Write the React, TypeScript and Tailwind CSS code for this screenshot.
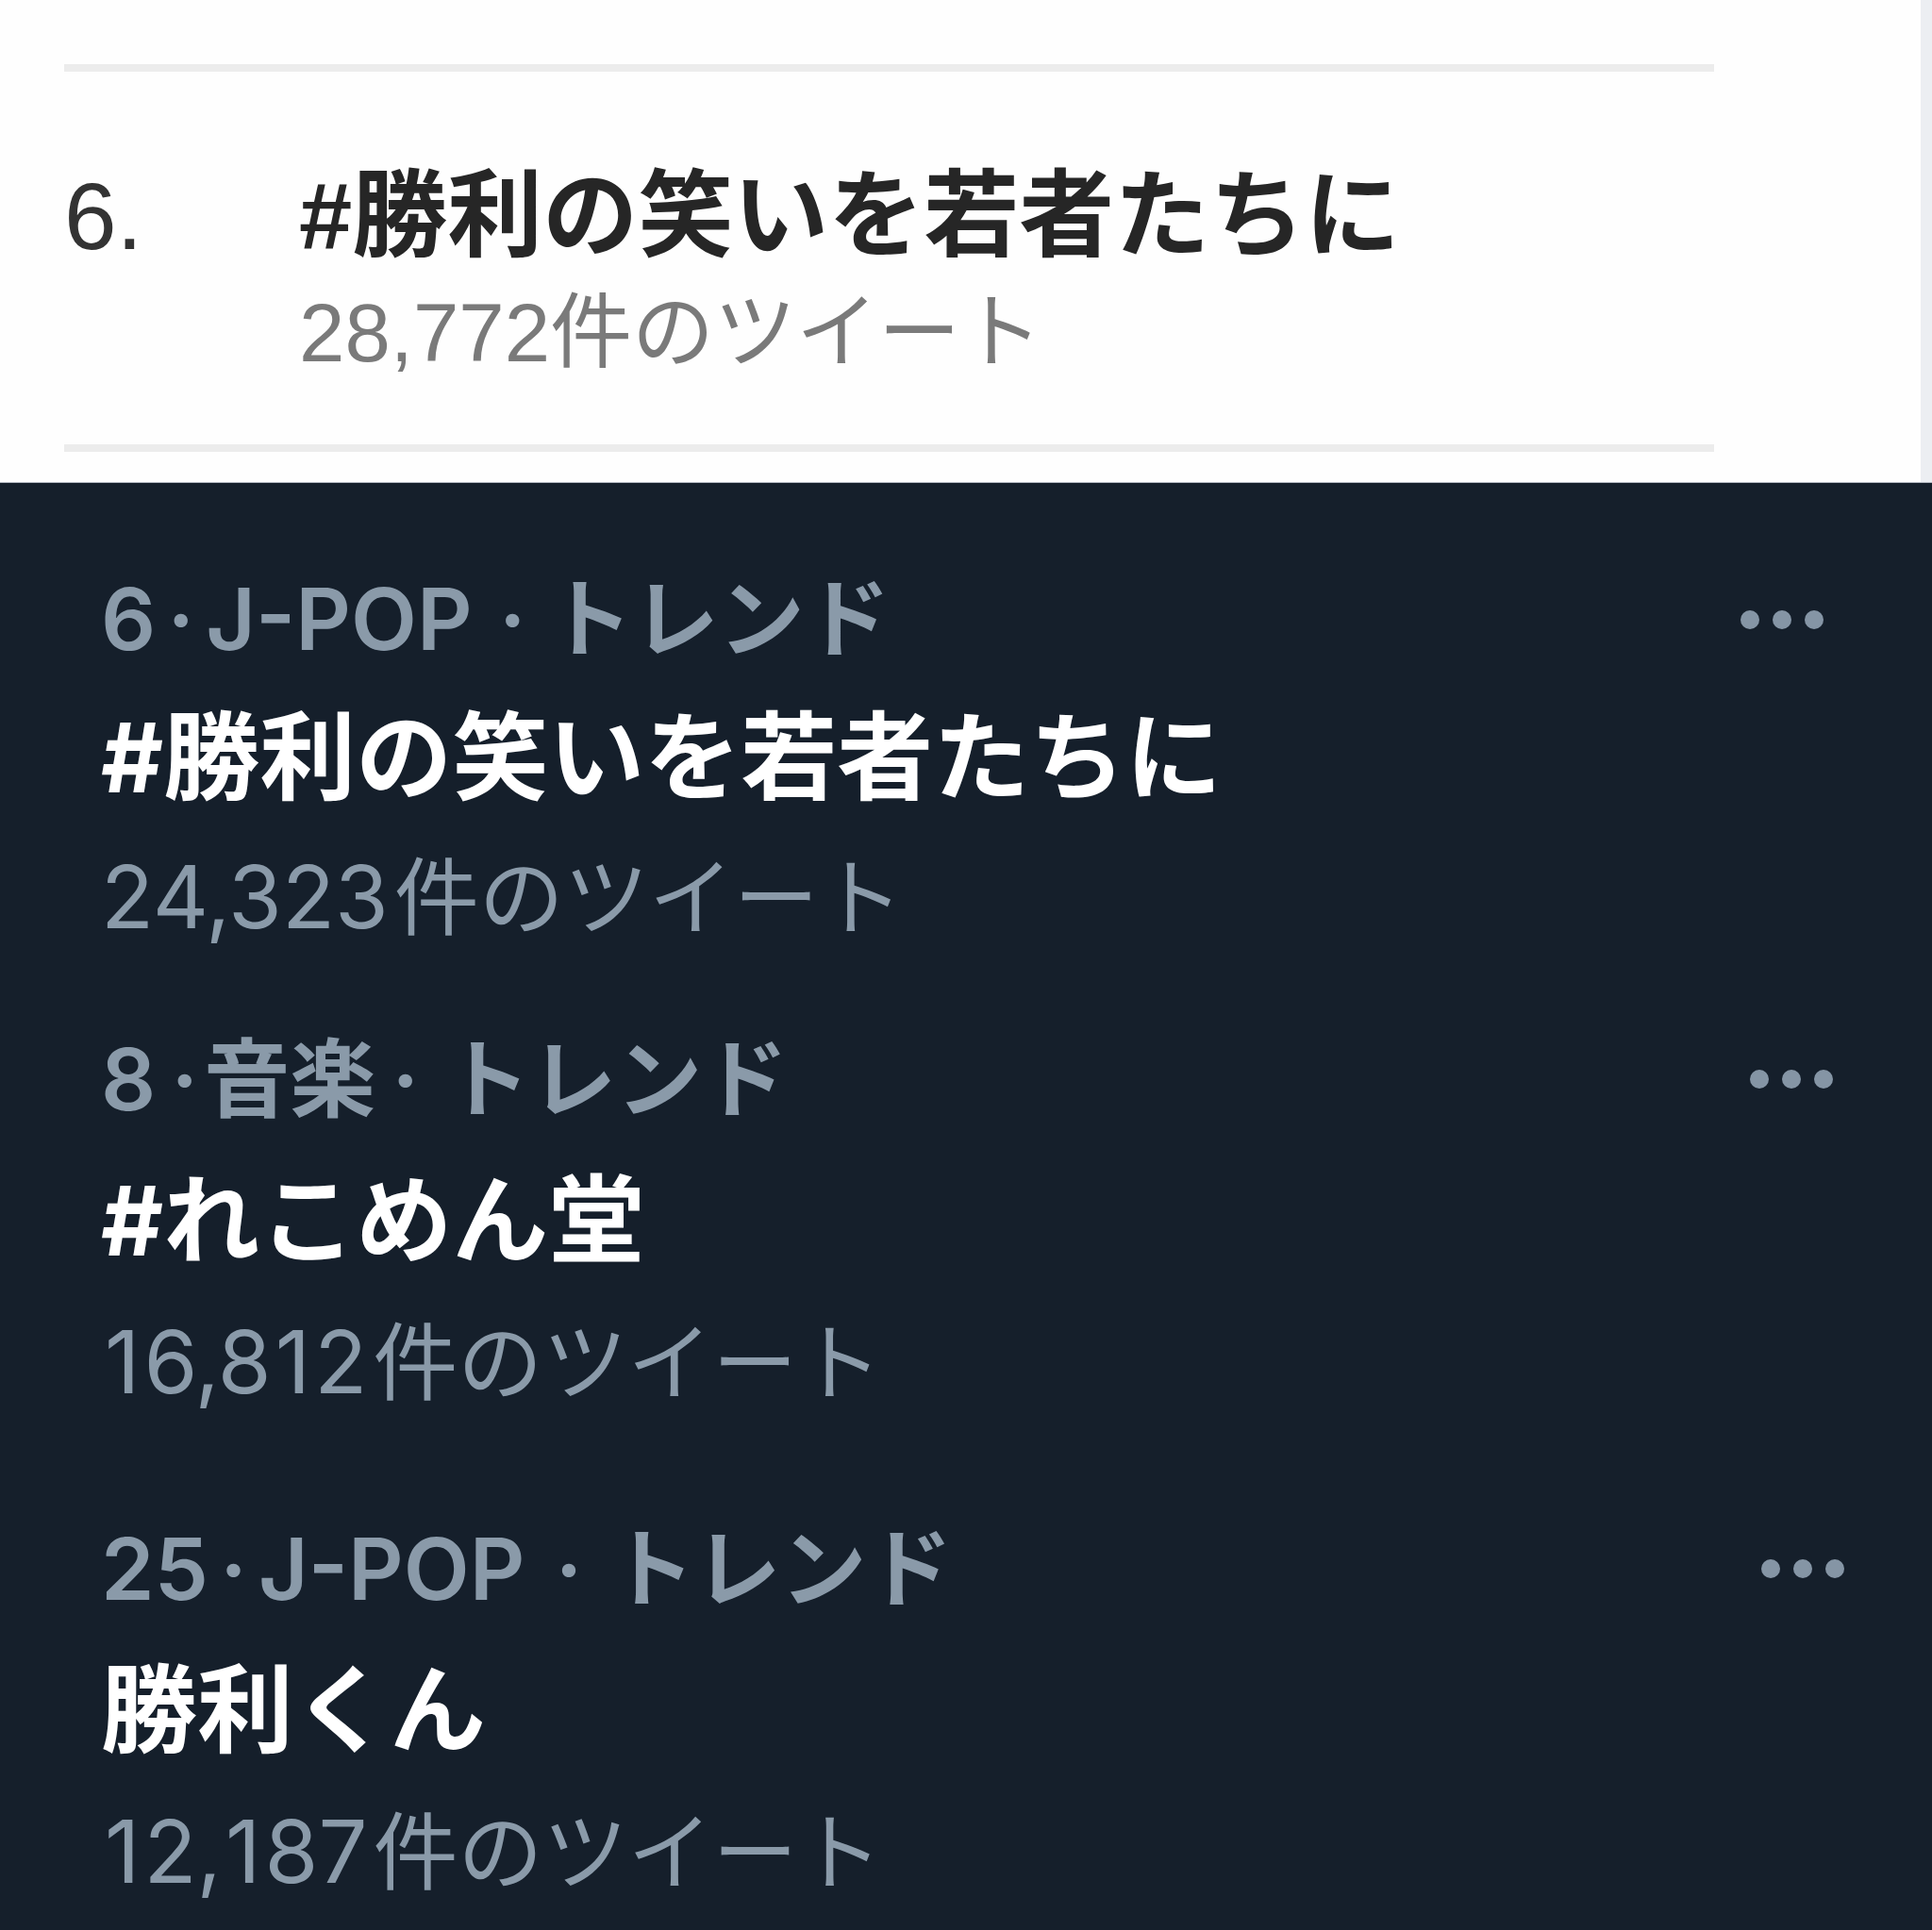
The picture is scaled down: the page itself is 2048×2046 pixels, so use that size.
import type React from "react"

interface Trend {
  rank: string
  category: string
  title: string
  count: string
  leading: string
  gapTop: string
  dotsPad: string
  sepA: string
  sepB: string
}

const trends: Trend[] = [
  {
    rank: "6",
    category: "J-POP",
    title: "#勝利の笑いを若者たちに",
    count: "24,323",
    leading: "leading-[147px]",
    gapTop: "mt-[71px]",
    dotsPad: "pr-[115px]",
    sepA: "mx-[12px]",
    sepB: "ml-[28px] mr-[22px]",
  },
  {
    rank: "8",
    category: "音楽",
    title: "#れこめん堂",
    count: "16,812",
    leading: "leading-[150px]",
    gapTop: "mt-[44px]",
    dotsPad: "pr-[105px]",
    sepA: "ml-[16px] mr-[6px]",
    sepB: "ml-[17px] mr-[27px]",
  },
  {
    rank: "25",
    category: "J-POP",
    title: "勝利くん",
    count: "12,187",
    leading: "leading-[150px]",
    gapTop: "mt-[68px]",
    dotsPad: "pr-[93px]",
    sepA: "mx-[12px]",
    sepB: "ml-[32px] mr-[28px]",
  },
]

const MoreDots: React.FC = () => (
  <div className="flex items-center gap-[14px]">
    <span className="w-[20px] h-[20px] rounded-full bg-[#8595a5]" />
    <span className="w-[20px] h-[20px] rounded-full bg-[#8595a5]" />
    <span className="w-[20px] h-[20px] rounded-full bg-[#8595a5]" />
  </div>
)

// the "1" in the source font is wider than Inter's
const Count: React.FC<{ value: string }> = ({ value }) => (
  <span className="text-[92px]">
    {value.split("").map((c, i) =>
      c === "1" ? (
        <span key={i} className="px-[4px]">
          1
        </span>
      ) : (
        c
      )
    )}
  </span>
)

const TrendRow: React.FC<{ trend: Trend }> = ({ trend }) => (
  <div className={`${trend.gapTop} flex flex-col`}>
    <div className={`flex items-center justify-between ${trend.dotsPad}`}>
      <div className={`${trend.leading} text-[91px] font-semibold text-[#8a9aa9] whitespace-nowrap`}>
        {trend.rank}
        <span className={trend.sepA}>·</span>
        {trend.category}
        <span className={trend.sepB}>·</span>
        トレンド
      </div>
      <MoreDots />
    </div>
    <div className={`${trend.leading} text-[102px] font-bold text-white whitespace-nowrap`}>
      {trend.title}
    </div>
    <div className={`${trend.leading} text-[90px] text-[#8a9aa9] whitespace-nowrap`}>
      <Count value={trend.count} />
      <span className="ml-[6px]">件のツイート</span>
    </div>
  </div>
)

export default function App() {
  return (
    <div className="w-[2048px] h-[2046px] overflow-hidden flex flex-col">
      <div className="h-[512px] flex bg-[#fefefe] border-b border-[#b4b9c2] font-['Liberation_Sans','Noto_Sans_CJK_JP',sans-serif]">
        <div className="flex-1 flex flex-col pl-[68px] pr-[219px]">
          <div className="mt-[68px] h-[8px] bg-[#ececec]" />
          <div className="mt-[91px] flex">
            <div className="w-[249px] leading-[124px] text-[100px] text-[#333333]">6.</div>
            <div className="flex flex-col">
              <div className="leading-[124px] text-[101px] font-bold text-[#262626] whitespace-nowrap">
                #勝利の笑いを若者たちに
              </div>
              <div className="leading-[124px] text-[87px] text-[#7a7a7a] whitespace-nowrap">
                28,772件のツイート
              </div>
            </div>
          </div>
          <div className="mt-[56px] h-[8px] bg-[#ececec]" />
        </div>
        <div className="w-[12px] bg-[#eceef2]" />
      </div>
      <div className="flex-1 bg-[#151f2b] pl-[107px] font-['Inter','Noto_Sans_CJK_JP',sans-serif]">
        {trends.map((t) => (
          <TrendRow key={t.title} trend={t} />
        ))}
      </div>
    </div>
  )
}
